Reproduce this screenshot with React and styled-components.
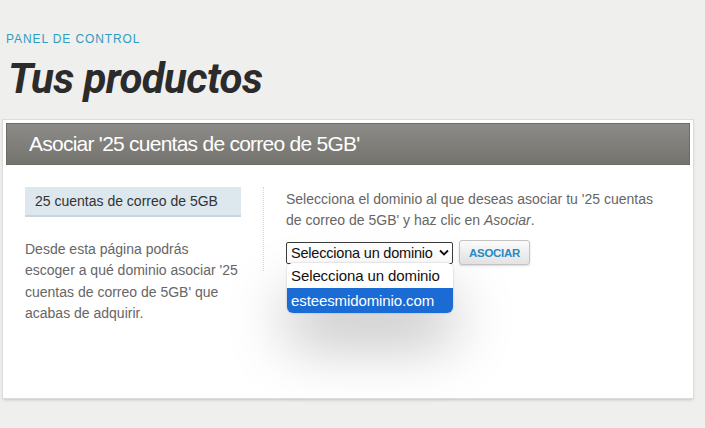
import React from 'react';
import styled, { createGlobalStyle } from 'styled-components';

const GlobalStyle = createGlobalStyle`
  html, body {
    margin: 0;
    padding: 0;
    background: #efefed;
    font-family: "Liberation Sans", Arial, sans-serif;
  }
`;

//Page wrapper
const Page = styled.div`
  width: 705px;
  height: 428px;
  padding: 32px 12px 0 3px;
  box-sizing: border-box;
  overflow: hidden;
`;

const Kicker = styled.div`
  margin-left: 3px;
  font-size: 12px;
  letter-spacing: 0.9px;
  color: #2f9cc2;
  line-height: 14px;
`;

const Title = styled.h1`
  margin: 9px 0 0 5px;
  font-family: Roboto, "Liberation Sans", sans-serif;
  font-style: italic;
  font-weight: 700;
  font-size: 42px;
  line-height: 48px;
  letter-spacing: -0.6px;
  color: #2b2b2b;
`;

//Main panel
const Panel = styled.section`
  margin-top: 17px;
  width: 690px;
  height: 278px;
  box-sizing: border-box;
  background: #fff;
  border: 3px solid #fff;
  outline: 1px solid #dcdcda;
  box-shadow: 0 2px 3px rgba(0, 0, 0, 0.18);
`;

const PanelHeader = styled.div`
  height: 42px;
  display: flex;
  align-items: center;
  padding-left: 22px;
  background: linear-gradient(#8c8b87, #74736e);
  border: 1px solid #6c6b67;
  box-sizing: border-box;
  color: #fff;
  font-size: 21px;
  letter-spacing: -0.75px;
`;

const Body = styled.div`
  display: flex;
  padding: 22px 0 0 19px;
`;

const Side = styled.div`
  width: 216px;
  padding-right: 22px;
  border-right: 1px dotted #d6d6d6;
  height: 84px;
`;

const Tag = styled.div`
  height: 30px;
  box-sizing: border-box;
  padding: 6px 0 0 10px;
  background: #dce7ee;
  border-bottom: 2px solid #c9d5dd;
  font-size: 14px;
  color: #333;
`;

const Note = styled.p`
  margin: 22px 0 0;
  font-size: 14px;
  line-height: 21.3px;
  color: #666;
`;

const Main = styled.div`
  position: relative;
  padding: 2px 0 0 22px;
  width: 382px;
`;

const Lead = styled.p`
  margin: 0;
  font-size: 14px;
  line-height: 21px;
  color: #666;
`;

const FormRow = styled.div`
  display: flex;
  align-items: center;
  gap: 6px;
  margin-top: 9px;
`;

const Select = styled.div`
  width: 167px;
  height: 22px;
  box-sizing: border-box;
  border: 1px solid #3c3c3c;
  border-radius: 2px;
  display: flex;
  align-items: center;
  justify-content: space-between;
  padding: 0 3px 0 4px;
  font-size: 14.5px;
  letter-spacing: -0.2px;
  white-space: nowrap;
  color: #111;
  background: #fff;
`;

const Button = styled.button`
  height: 25px;
  padding: 0 9px;
  border: 1px solid #c3c3c3;
  border-radius: 3px;
  background: linear-gradient(#fbfbfb, #e3e3e3);
  box-shadow: 0 1px 2px rgba(0, 0, 0, 0.15);
  color: #2a8ac0;
  font-family: "Liberation Sans", Arial, sans-serif;
  font-weight: 700;
  font-size: 11.5px;
  letter-spacing: -0.3px;
`;

//Open dropdown list lying over the panel
const Menu = styled.ul`
  position: absolute;
  left: 23px;
  top: 76px;
  width: 166px;
  margin: 0;
  padding: 0;
  list-style: none;
  background: #fff;
  border-radius: 6px;
  overflow: hidden;
  box-shadow: 0 30px 60px rgba(0, 0, 0, 0.26), 0 0 2px rgba(0, 0, 0, 0.25);
`;

const Option = styled.li`
  height: 25px;
  line-height: 25px;
  padding-left: 4px;
  font-size: 15px;
  letter-spacing: -0.1px;
  white-space: nowrap;
  color: ${p => (p.$active ? '#fff' : '#111')};
  background: ${p => (p.$active ? '#1a6bd4' : '#fff')};
`;

const Chevron = () => (
  <svg width="10" height="7" viewBox="0 0 10 7">
    <path d="M1 1.5 L5 5.5 L9 1.5" fill="none" stroke="#111" strokeWidth="1.8" />
  </svg>
);

export default function App() {
  const name = '25 cuentas de correo de 5GB';
  return (
    <Page>
      <GlobalStyle />
      <Kicker>PANEL DE CONTROL</Kicker>
      <Title>Tus productos</Title>
      <Panel>
        <PanelHeader>Asociar '{name}'</PanelHeader>
        <Body>
          <Side>
            <Tag>{name}</Tag>
            <Note>
              Desde esta página podrás escoger a qué dominio asociar '{name}' que acabas de adquirir.
            </Note>
          </Side>
          <Main>
            <Lead>
              Selecciona el dominio al que deseas asociar tu '{name}' y haz clic en <em>Asociar</em>.
            </Lead>
            <FormRow>
              <Select>
                <span>Selecciona un dominio</span>
                <Chevron />
              </Select>
              <Button>ASOCIAR</Button>
            </FormRow>
            <Menu>
              <Option>Selecciona un dominio</Option>
              <Option $active>esteesmidominio.com</Option>
            </Menu>
          </Main>
        </Body>
      </Panel>
    </Page>
  );
}
